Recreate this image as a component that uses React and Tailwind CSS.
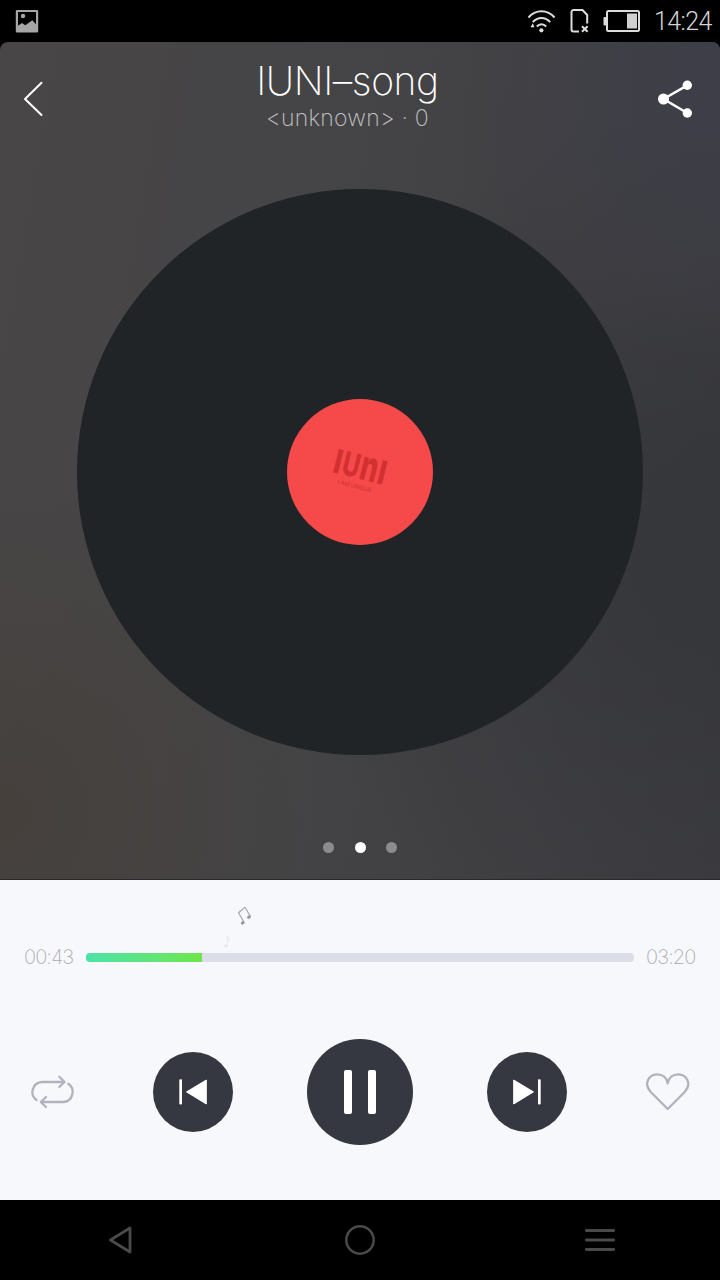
const pages = ['lyrics', 'disc', 'queue'];

function StatusBar() {
  return (
    <div className="flex h-[42px] shrink-0 items-center justify-between bg-black pl-[15px] pr-[8px]">
      <svg width="24" height="24" viewBox="0 0 24 24" fill="#a6a6a6">
        <path
          fillRule="evenodd"
          d="M2 1h20a1.200 1.200 0 0 1 1.200 1.200v20a1.200 1.200 0 0 1-1.200 1.200H2a1.200 1.200 0 0 1-1.200-1.200v-20A1.200 1.200 0 0 1 2 1zM3 3v13.700l4-2.700 3.300 2.200 7-4.900 3.700 3.900V3z"
        />
        <circle cx="8" cy="7" r="2.200" />
      </svg>

      <div className="flex items-center">
        <svg width="30" height="26" viewBox="0 0 30 26" fill="none" stroke="#dcdcdc" strokeWidth="2" className="mr-[13px]">
          <path d="M2.500 9.500C9.500 1.200 21.500 1.200 28.500 9.500" />
          <path d="M6.800 14.200c4.800-5.600 12.600-5.600 17.400 0" />
          <path d="M10.800 18.500c2.800-3 6.600-3 9.400 0" />
          <circle cx="15.400" cy="22.300" r="2.100" fill="#dcdcdc" stroke="none" />
          <path d="M4.500 19.300l2.300-4 1.700 4z" fill="#dcdcdc" stroke="none" />
        </svg>
        <svg width="22" height="26" viewBox="0 0 22 26" fill="none" stroke="#dcdcdc" strokeWidth="2" className="mr-[12px]">
          <path d="M10 23.500H4.500a2 2 0 0 1-2-2V4a2 2 0 0 1 2-2h9l4.700 5v8.500" />
          <path d="M13 18.200l5.600 5.600M18.600 18.200L13 23.800" />
        </svg>
        <svg width="38" height="26" viewBox="0 0 38 26" className="mr-[13px]">
          <rect x="4" y="3" width="32" height="20" rx="1.500" fill="none" stroke="#dcdcdc" strokeWidth="2" />
          <rect x="0.500" y="9" width="3" height="8.500" rx="1" fill="#dcdcdc" />
          <rect x="24" y="5.500" width="10" height="15" fill="#cfcfcf" />
        </svg>
        <span className="w-[58px] whitespace-nowrap pt-px font-['Roboto'] text-[25px] font-light leading-none tracking-[-0.6px] text-[#d4d4d4]">
          14:24
        </span>
      </div>
    </div>
  );
}

function Header() {
  return (
    <div className="flex h-[147px] items-start justify-between px-[20px]">
      <button className="mt-[37px]">
        <svg width="26" height="40" viewBox="0 0 26 40" fill="none" stroke="#fff" strokeWidth="2" strokeLinecap="round" strokeLinejoin="round">
          <path d="M21.500 3.800L5 20l16.500 16" />
        </svg>
      </button>
      <div className="flex flex-col items-center pr-[7px] pt-[15px] font-['Inter']">
        <h1 className="whitespace-nowrap text-[39px] font-[250] leading-[48px] tracking-[-0.4px] text-white">IUNI–song</h1>
        <p className="whitespace-nowrap text-[23px] font-[250] leading-[26px] tracking-[0.2px] text-[#c4c4c6]">&lt;unknown&gt; · 0</p>
      </div>
      <button className="mt-[37px] mr-[4px]">
        <svg width="40" height="40" viewBox="0 0 40 40" fill="#fff">
          <path d="M31.300 6.300L7.500 20l23.800 14" fill="none" stroke="#fff" strokeWidth="2.500" />
          <circle cx="7.500" cy="20" r="5.500" />
          <circle cx="31.300" cy="6.300" r="4.700" />
          <circle cx="31.300" cy="34" r="4.700" />
        </svg>
      </button>
    </div>
  );
}

function Disc() {
  return (
    <div className="mx-auto flex size-[566px] items-center justify-center rounded-full bg-[#202427]">
      <div className="flex size-[146px] items-center justify-center rounded-full bg-[#f64a4a]">
        <svg width="120" height="120" viewBox="-20 -30 120 120" fill="#d33031" className="overflow-visible">
          <g transform="rotate(14 41 25)" className="font-['Inter'] font-extrabold">
            <text fontSize="33" transform="translate(13.500 37) scale(0.850 1)">I</text>
            <text fontSize="33" transform="translate(22.500 36.700) scale(0.720 1)">U</text>
            <text fontSize="42" transform="translate(40.600 37) scale(0.660 1)">n</text>
            <text fontSize="33" transform="translate(59 37) scale(0.850 1)">I</text>
            <text x="22" y="47" fontSize="5.800" textLength="35" lengthAdjust="spacingAndGlyphs" className="font-normal">
              I AM UNIQUE
            </text>
          </g>
        </svg>
      </div>
    </div>
  );
}

function Progress() {
  return (
    <div className="relative flex h-[154px] items-center justify-between px-[24px] font-['Inter'] text-[20px] font-[250] tracking-[-0.9px] text-[#adadb0]">
      <span className="w-[50px] whitespace-nowrap">00:43</span>
      <div className="h-[9px] w-[548px] overflow-hidden rounded-[4px] bg-[#dcdee7]">
        <div className="h-full w-[116px] bg-linear-to-r from-[#4ce2a6] to-[#6ee648]" />
      </div>
      <span className="w-[50px] whitespace-nowrap">03:20</span>

      {/* notes floating up from the playhead */}
      <svg width="34" height="48" viewBox="0 0 34 48" fill="none" className="absolute left-[220px] top-[24px]">
        <path d="M23.700 17.500L18.500 8.700 25 3.300l5.300 9" stroke="#a4a5aa" strokeWidth="1.200" />
        <ellipse cx="22.800" cy="18.800" rx="2" ry="1.600" fill="#94959a" transform="rotate(-35 22.800 18.800)" />
        <ellipse cx="29" cy="13" rx="2" ry="1.600" fill="#94959a" transform="rotate(-35 29 13)" />
        <path d="M7.300 42V32c.3 2.200 2.300 2.500 1.700 5" stroke="#e4e5ea" strokeWidth="0.900" />
        <ellipse cx="5.800" cy="42" rx="1.700" ry="1.300" fill="#e4e5ea" />
      </svg>
    </div>
  );
}

function Controls() {
  return (
    <div className="flex h-[116px] items-center pl-[30px]">
      <button>
        <svg width="46" height="36" viewBox="0 0 46 36" fill="none" stroke="#b0b3be" strokeWidth="2.300" strokeLinecap="round" strokeLinejoin="round">
          <path d="M6.500 26A10 10 0 0 1 12 8h22" />
          <path d="M29.300 2.800L34.500 8l-5.200 5" />
          <path d="M38.300 9.800A10 10 0 0 1 33 28H11" />
          <path d="M16 23l-5.200 5 5.200 5" />
        </svg>
      </button>
      <button className="ml-[77px] size-[80px] rounded-full bg-[#353840]">
        <svg width="80" height="80" viewBox="0 0 80 80" fill="#fff">
          <rect x="26.300" y="27.300" width="2.700" height="25.200" rx="1" />
          <path d="M33.500 39.900L53.300 28v24z" stroke="#fff" strokeWidth="1" strokeLinejoin="round" />
        </svg>
      </button>
      <button className="mx-[74px] flex size-[106px] items-center justify-center gap-[16px] rounded-full bg-[#353840]">
        <span className="h-[44px] w-[8px] rounded-[2px] bg-white" />
        <span className="h-[44px] w-[8px] rounded-[2px] bg-white" />
      </button>
      <button className="size-[80px] rounded-full bg-[#353840]">
        <svg width="80" height="80" viewBox="0 0 80 80" fill="#fff">
          <path d="M46.500 39.900L26.700 28v24z" stroke="#fff" strokeWidth="1" strokeLinejoin="round" />
          <rect x="51" y="27.300" width="2.700" height="25.200" rx="1" />
        </svg>
      </button>
      <button className="ml-[78px]">
        <svg width="46" height="42" viewBox="0 0 46 42" fill="none" stroke="#b0b3be" strokeWidth="2.300" strokeLinejoin="round">
          <path d="M22.700 38L5.500 20.700C-1.500 13 3.500 3.500 12 3.300c5.700-.1 9.700 3.500 10.700 9 1-5.500 5-9.100 10.700-9 8.500.2 13.500 9.700 6.500 17.400z" />
        </svg>
      </button>
    </div>
  );
}

function NavBar() {
  return (
    <div className="grid h-[80px] shrink-0 grid-cols-3 place-items-center bg-black">
      <svg width="32" height="32" viewBox="0 0 32 32" fill="none" stroke="#4a4a4a" strokeWidth="2.800" strokeLinejoin="round">
        <path d="M26 4v24L6.500 16z" />
      </svg>
      <svg width="32" height="32" viewBox="0 0 32 32" fill="none" stroke="#4a4a4a" strokeWidth="2.500">
        <circle cx="16" cy="16" r="13.700" />
      </svg>
      <svg width="32" height="32" viewBox="0 0 32 32" stroke="#4a4a4a" strokeWidth="2.800" strokeLinecap="round">
        <path d="M2.300 6.500h27.400M2.300 16h27.400M2.300 25.500h27.400" />
      </svg>
    </div>
  );
}

export default function App() {
  return (
    <div className="flex h-[1280px] w-[720px] flex-col overflow-hidden bg-black">
      <StatusBar />
      <div className="h-[838px] shrink-0 rounded-t-[8px] border-b border-[#2a2a2b] bg-[radial-gradient(circle_at_100%_5%,#3e3e49_0%,transparent_25%),radial-gradient(circle_at_0%_92%,#45403c_0%,transparent_32%),radial-gradient(circle_at_100%_60%,#35363a_0%,transparent_50%),linear-gradient(100deg,#494647_0%,#444446_45%,#3c3c40_100%)]">
        <Header />
        <Disc />
        <div className="mt-[87px] flex justify-center gap-[20.5px]">
          {pages.map((page) => (
            <span
              key={page}
              className={`size-[11px] rounded-full ${page === 'disc' ? 'bg-white' : 'bg-[#8c8c8d]'}`}
            />
          ))}
        </div>
      </div>
      <div className="h-[320px] shrink-0 bg-[#f7f8fc]">
        <Progress />
        <Controls />
      </div>
      <NavBar />
    </div>
  );
}
